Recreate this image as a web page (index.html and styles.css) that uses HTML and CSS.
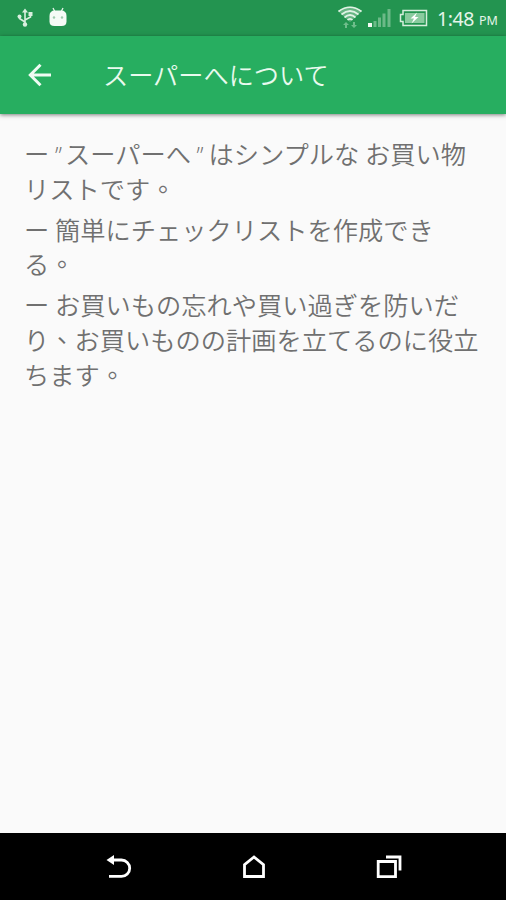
FILE: index.html
```html
<!DOCTYPE html>
<html lang="ja">
<head>
<meta charset="utf-8">
<title>スーパーへについて</title>
<link rel="stylesheet" href="styles.css">
</head>
<body>
<header class="status">
  <svg class="usb" width="18" height="20" viewBox="0 0 18 20" fill="none" stroke="#d9efdf" stroke-width="1.6"><path d="M9 3v13M9 14L3.500 10.500V8M9 12l5.500-3V5"/><path d="M9 .5l3 4H6z" fill="#d9efdf" stroke="none"/><circle cx="3.500" cy="8.500" r="2" fill="#d9efdf" stroke="none"/><path d="M12.500 4h4v4h-4z" fill="#d9efdf" stroke="none"/><circle cx="9" cy="16.500" r="2.200" fill="#d9efdf" stroke="none"/></svg>
  <svg class="droid" width="20" height="20" viewBox="0 0 20 20"><path d="M5 1l2 4M15 1l-2 4" stroke="#e8f5eb" stroke-width="1.300"/><path d="M1.500 9Q1.500 3.500 7 3.500h6q5.500 0 5.500 5.500v5.500q0 4.500-5 4.500h-7q-5 0-5-4.500z" fill="#f5fbf6"/><circle cx="6" cy="10.500" r="1.200" fill="#9dcbac"/><circle cx="14" cy="10.500" r="1.200" fill="#9dcbac"/></svg>
  <span class="spacer"></span>
  <svg class="wifi" width="26" height="24" viewBox="0 0 26 24" fill="none"><path d="M1 6Q13-3 25 6L13 17z" fill="#66b583"/><g stroke="#e0f3e5" stroke-width="1.700"><path d="M1.500 6.500Q13-2 24.500 6.500M4.500 9.500Q13 2.500 21.500 9.500M7.500 12.500Q13 7.500 18.500 12.500M10.500 15Q13 12.500 15.500 15"/></g><path d="M9 17l-3 3h2v3h2v-3h2zM17 23l-3-3h2v-3h2v3h2z" fill="#6fbd8b"/></svg>
  <svg class="signal" width="24" height="18" viewBox="0 0 24 18" fill="#6cb988"><path d="M5.500 12h3v6h-3zM10 8.500h3V18h-3zM14.500 4.500h3V18h-3zM19.500 0h3v18h-3z"/><path d="M0 14h4v4H0z" fill="#f4fbf5"/></svg>
  <svg class="battery" width="29" height="18" viewBox="0 0 29 18"><path d="M4 1.500h23.500v15H4v-4H1.500v-7H4z" fill="none" stroke="#d6eddc" stroke-width="1.500"/><path d="M6 4h19.500v10H6z" fill="#8acb9f"/><path d="M18 3.500l-6.500 6H15L12.500 14.500l7-6.500H16z" fill="#fff"/></svg>
  <span class="time">1:48</span><span class="pm">PM</span>
</header>
<nav class="appbar">
  <svg class="back" width="24" height="24" viewBox="0 0 24 24" fill="none" stroke="#f0fbf3" stroke-width="3"><path d="M23 12H2.500M12.500 1.800L2.300 12l10.200 10.200"/></svg>
  <h1>スーパーへについて</h1>
</nav>
<main>
  <p>ー <span class="quote first">”</span>スーパーへ <span class="quote second">”</span>はシンプルな お買い物<br>リストです<span class="stop" lang="zh-Hant">。</span></p>
  <p>ー 簡単にチェックリストを作成でき<br>る<span class="stop" lang="zh-Hant">。</span></p>
  <p>ー お買いもの忘れや買い過ぎを防いだ<br>り<span class="stop" lang="zh-Hant">、</span>お買いものの計画を立てるのに役立<br>ちます<span class="stop" lang="zh-Hant">。</span></p>
</main>
<footer>
  <svg width="26" height="26" viewBox="0 0 26 26" fill="none" stroke="#fff" stroke-width="2.800"><path d="M6 6h9.500a8.200 8.200 0 0 1 0 16.400H3"/><path d="M.5 6L8 1v10z" fill="#fff" stroke="none"/></svg>
  <svg width="26" height="26" viewBox="0 0 26 26" fill="none" stroke="#fff" stroke-width="2.800"><path d="M3.500 22.500V10.700L13 3l9.500 7.700v11.800z"/></svg>
  <svg width="26" height="26" viewBox="0 0 26 26" fill="none" stroke="#fff" stroke-width="2.800"><path d="M2.200 7.500h17.300v15.200H2.200zM10 3h14v13.500"/></svg>
</footer>
</body>
</html>
```
FILE: styles.css
```css
* { box-sizing: border-box; }
body {
  margin: 0;
  height: 900px;
  display: flex;
  flex-direction: column;
  overflow: hidden;
  background: #fafafa;
  font-family: "Noto Sans CJK JP", sans-serif;
}
svg { display: block; flex: none; }
.status {
  height: 36px;
  flex: none;
  display: flex;
  align-items: center;
  padding: 0 7px 0 16px;
  background: #239450;
  color: #e5f5e9;
  font-family: "Noto Sans", sans-serif;
}
.droid { margin-left: 14px; margin-top: -2px; }
.spacer { flex: 1; }
.wifi { margin-top: -2px; }
.signal { margin-left: 5px; }
.battery { margin-left: 7px; }
.time { width: 38px; margin-left: 9px; font-size: 19.5px; letter-spacing: -0.4px; white-space: nowrap; }
.pm { width: 20px; margin-left: 4px; margin-top: 5px; font-size: 12.5px; }
.appbar {
  height: 78px;
  flex: none;
  display: flex;
  align-items: center;
  padding-left: 28px;
  background: #27ae60;
  box-shadow: 0 1px 4px rgba(0, 0, 0, .5);
}
.back { margin-top: -1px; }
h1 {
  margin: -3px 0 0 51px;
  color: #e9faee;
  font-size: 25.2px;
  font-weight: 350;
  line-height: 36px;
}
main {
  flex: 1;
  padding: 22px 0 0 24px;
  color: #707070;
  font-size: 25.25px;
  font-weight: 350;
  line-height: 34.6px;
  white-space: nowrap;
}
p { margin: 0 0 6.5px; }
.stop { font-family: "Noto Sans CJK TC", sans-serif; }
.quote {
  display: inline-block;
  width: 10px;
  font-family: "Open Sans", sans-serif;
  font-size: 23px;
  line-height: 20px;
}
.quote.second { width: 12px; }
footer {
  height: 67px;
  flex: none;
  display: flex;
  align-items: center;
  justify-content: center;
  gap: 109px;
  padding-left: 1px;
  background: #000;
}
```
